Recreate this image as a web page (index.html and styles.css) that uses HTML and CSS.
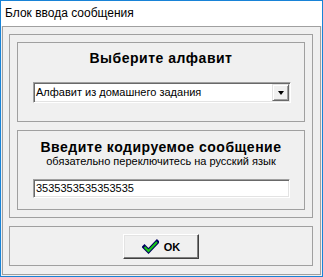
FILE: index.html
```html
<!DOCTYPE html>
<html lang="ru">
  <head>
    <meta charset="UTF-8">
    <title>Блок ввода сообщения</title>
    <link rel="stylesheet" href="styles.css">
  </head>
  <body>
    <div class="okno">
      <div class="judul">Блок ввода сообщения</div>
      <div class="klien">
        <div class="rangka">
          <div class="grup">
            <h2>Выберите алфавит</h2>
            <div class="pilih">
              <span class="pilih-teks">Алфавит из домашнего задания</span>
              <span class="pilih-tombol"><span class="segitiga"></span></span>
            </div>
          </div>
          <div class="grup grup-kedua">
            <h2>Введите кодируемое сообщение</h2>
            <p>обязательно переключитесь на русский язык</p>
            <div class="isian">3535353535353535</div>
          </div>
        </div>
        <div class="bawah">
          <button type="button" class="tombol-ok">
            <svg width="17" height="15" viewBox="0 0 17 15">
              <polyline points="2.5,8 6.5,12 15,3" fill="none" stroke="#000060" stroke-width="4.2" stroke-linecap="square"/>
              <polyline points="2.5,8 6.5,12 15,3" fill="none" stroke="#18c818" stroke-width="2"/>
            </svg>
            <span>OK</span>
          </button>
        </div>
      </div>
    </div>
  </body>
</html>
```

FILE: styles.css
```css
body {
    margin: 0;
    font-family: "Liberation Sans", Arial, sans-serif;
    color: black;
}
.okno {
    width: 323px;
    height: 277px;
    box-sizing: border-box;
    border: 1px solid #1883d7;
    background-color: #f0f0f0;
}
.judul {
    height: 25px;
    line-height: 25px;
    padding-left: 4px;
    background-color: white;
    font-size: 12px;
}
.klien {
    margin: 0 1px 1px 1px;
    border: 1px solid #a0a0a0;
    padding: 7px 7px 8px 6px;
    display: flex;
    flex-direction: column;
    gap: 8px;
}
.rangka {
    border: 1px solid #a0a0a0;
    padding: 7px;
    display: flex;
    flex-direction: column;
    gap: 8px;
}
.grup {
    height: 71px;
    border: 1px solid #a0a0a0;
    padding-top: 7px;
}
.grup-kedua {
    padding-top: 8px;
    height: 70px;
}
.grup h2 {
    margin: 0;
    font-size: 14px;
    line-height: 16px;
    letter-spacing: 0.5px;
    text-align: center;
}
.grup p {
    margin: 0;
    font-size: 11px;
    line-height: 13px;
    text-align: center;
}
.pilih {
    margin: 16px 0 0 15px;
    width: 258px;
    height: 21px;
    box-sizing: border-box;
    border: 1px solid;
    border-color: #a0a0a0 white white #a0a0a0;
    box-shadow: inset 1px 1px 0 #696969, inset -1px -1px 0 #e3e3e3;
    background-color: white;
    padding: 1px;
    display: flex;
}
.pilih-teks {
    flex: 1;
    font-size: 11px;
    line-height: 17px;
    padding-left: 1px;
}
.pilih-tombol {
    width: 17px;
    height: 17px;
    box-sizing: border-box;
    background-color: #f0f0f0;
    border: 1px solid;
    border-color: #e3e3e3 #696969 #696969 #e3e3e3;
    box-shadow: inset 1px 1px 0 white, inset -1px -1px 0 #a0a0a0;
    display: flex;
    align-items: center;
    justify-content: center;
}
.segitiga {
    width: 0;
    height: 0;
    border-left: 3.5px solid transparent;
    border-right: 3.5px solid transparent;
    border-top: 4px solid black;
    margin-top: 1px;
}
.isian {
    margin: 11px 0 0 15px;
    width: 257px;
    height: 19px;
    box-sizing: border-box;
    border: 1px solid;
    border-color: #a0a0a0 white white #a0a0a0;
    box-shadow: inset 1px 1px 0 #696969, inset -1px -1px 0 #e3e3e3;
    background-color: white;
    padding: 1px 2px;
    font-size: 11px;
    line-height: 15px;
}
.bawah {
    height: 38px;
    border: 1px solid #a0a0a0;
    display: flex;
    align-items: center;
    justify-content: center;
}
.tombol-ok {
    width: 76px;
    height: 25px;
    margin-top: 1px;
    box-sizing: border-box;
    border: 1px solid;
    border-color: white #404040 #404040 white;
    box-shadow: inset -1px -1px 0 #808080, inset 1px 1px 0 #e3e3e3;
    background-color: #f0f0f0;
    padding: 0;
    display: flex;
    align-items: center;
    justify-content: center;
    gap: 5px;
    font-family: "Liberation Sans", Arial, sans-serif;
    font-size: 11px;
    font-weight: bold;
}
.tombol-ok svg {
    display: block;
}
```
